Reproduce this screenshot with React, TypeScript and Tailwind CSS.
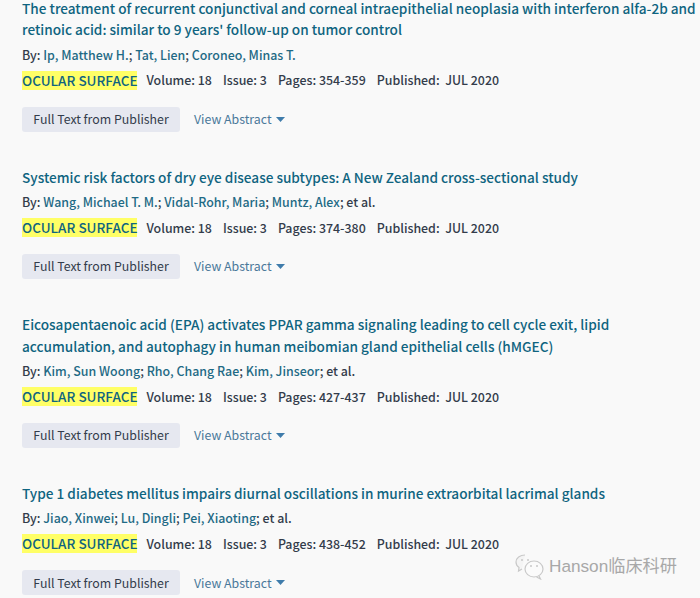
import React from "react";

const font = "font-['Noto_Sans_CJK_SC','Source_Sans_Pro',sans-serif]";

const articles = [
  {
    title: "The treatment of recurrent conjunctival and corneal intraepithelial neoplasia with interferon alfa-2b and retinoic acid: similar to 9 years' follow-up on tumor control",
    authors: ["Ip, Matthew H.", "Tat, Lien", "Coroneo, Minas T."],
    etAl: false,
    pages: "354-359",
  },
  {
    title: "Systemic risk factors of dry eye disease subtypes: A New Zealand cross-sectional study",
    authors: ["Wang, Michael T. M.", "Vidal-Rohr, Maria", "Muntz, Alex"],
    etAl: true,
    pages: "374-380",
  },
  {
    title: "Eicosapentaenoic acid (EPA) activates PPAR gamma signaling leading to cell cycle exit, lipid accumulation, and autophagy in human meibomian gland epithelial cells (hMGEC)",
    authors: ["Kim, Sun Woong", "Rho, Chang Rae", "Kim, Jinseor"],
    etAl: true,
    pages: "427-437",
  },
  {
    title: "Type 1 diabetes mellitus impairs diurnal oscillations in murine extraorbital lacrimal glands",
    authors: ["Jiao, Xinwei", "Lu, Dingli", "Pei, Xiaoting"],
    etAl: true,
    pages: "438-452",
  },
];

function Article({ a }: { a: (typeof articles)[number] }) {
  return (
    <div className="mb-[34.9px]">
      <h3 className="text-[13.6px] leading-[21.5px] font-medium text-[#0f6480]">{a.title}</h3>
      <div className="mt-[4px] text-[12.4px] leading-[20px] font-medium text-[#333c4b]">
        <span>By: </span>
        {a.authors.map((n, i) => (
          <span key={n}>
            <span className="text-[#1f6a85]">{n}</span>
            {i < a.authors.length - 1 ? "; " : ""}
          </span>
        ))}
        {a.etAl ? "; et al." : ""}
      </div>
      <div className="mt-[5.5px] flex items-center text-[12.4px] leading-[20px] font-medium text-[#333c4b]">
        <span className="bg-[#ffff66] text-[13.5px] leading-[19px] text-[#0f6480] whitespace-nowrap mr-[9px]">OCULAR SURFACE</span>
        <span className="mr-[11px]">Volume: 18</span>
        <span className="mr-[11px]">Issue: 3</span>
        <span className="mr-[11px]">Pages: {a.pages}</span>
        <span>Published:&nbsp; JUL 2020</span>
      </div>
      <div className="mt-[16.5px] flex items-center">
        <button type="button" className="h-[25px] w-[158px] rounded-[3px] bg-[#e6e8f0] text-[12.35px] text-[#333c4b]">
          Full Text from Publisher
        </button>
        <span className="ml-[14px] text-[12.35px] text-[#4a7899]">View Abstract</span>
        <svg width="9" height="5" viewBox="0 0 9 5" className="ml-[4px]">
          <path d="M0 0h9L4.500 5z" fill="#3f7cab" />
        </svg>
      </div>
    </div>
  );
}

export default function App() {
  return (
    <div className={`relative h-[598px] w-[700px] overflow-hidden bg-[#f9f9f9] ${font}`}>
      <div className="pl-[22px] -mt-[2.25px]">
        {articles.map((a) => (
          <Article key={a.pages} a={a} />
        ))}
      </div>
      {/* watermark */}
      <div className="absolute left-[515px] top-[554px] flex items-center text-[#a8a8a8]">
        <svg width="29" height="26" viewBox="0 0 29 26" fill="none" stroke="#c9c9c9" strokeWidth="1.2">
          <path d="M10 1c-5 0-9 3-9 7 0 2.400 1.200 4.300 3 5.600L3.500 17l3.500-2" fill="#f4f4f4" />
          <ellipse cx="19" cy="15" rx="9" ry="8" fill="#fbfbfb" />
          <path d="M24 22l1.500 3-4-2" />
          <circle cx="7" cy="6" r="1" fill="#c9c9c9" stroke="none" />
          <circle cx="13" cy="6" r="1" fill="#c9c9c9" stroke="none" />
          <circle cx="16" cy="12" r="1" fill="#c9c9c9" stroke="none" />
          <circle cx="22" cy="12" r="1" fill="#c9c9c9" stroke="none" />
        </svg>
        <span className="ml-[5px] text-[17.2px] leading-none font-['Liberation_Sans','Noto_Sans_CJK_SC',sans-serif]">Hanson临床科研</span>
      </div>
    </div>
  );
}
